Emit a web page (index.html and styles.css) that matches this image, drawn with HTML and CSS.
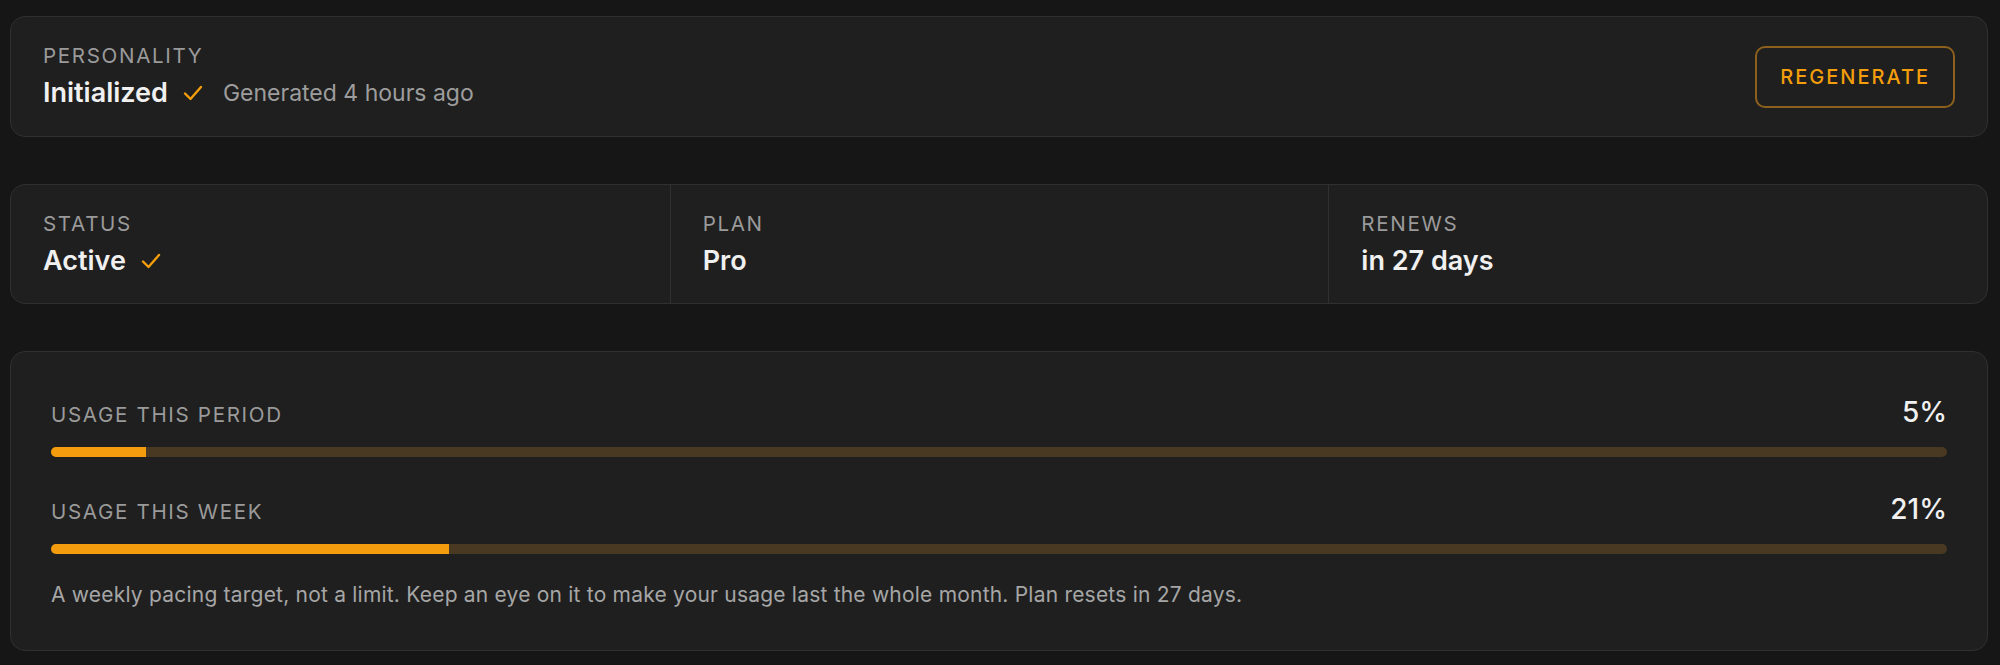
FILE: index.html
```html
<!DOCTYPE html>
<html lang="en">
<head>
    <meta charset="UTF-8">
    <meta name="viewport" content="width=device-width, initial-scale=1.0">
    <title>Account</title>
    <link rel="stylesheet" href="styles.css">
</head>
<body>
    <div id="page">
        <!-- Personality -->
        <section class="card card-row">
            <div class="field">
                <div class="label">Personality</div>
                <div class="value">
                    <span>Initialized</span>
                    <svg class="check" viewBox="0 0 24 24"><polyline points="4,12.5 9.5,18 20,6"/></svg>
                    <span class="sub">Generated 4 hours ago</span>
                </div>
            </div>
            <button class="btn-outline">Regenerate</button>
        </section>

        <!-- Subscription -->
        <section class="card card-cols">
            <div class="col">
                <div class="label">Status</div>
                <div class="value">
                    <span>Active</span>
                    <svg class="check" viewBox="0 0 24 24"><polyline points="4,12.5 9.5,18 20,6"/></svg>
                </div>
            </div>
            <div class="col">
                <div class="label">Plan</div>
                <div class="value">Pro</div>
            </div>
            <div class="col">
                <div class="label">Renews</div>
                <div class="value">in 27 days</div>
            </div>
        </section>

        <!-- Usage -->
        <section class="card card-usage">
            <div class="usage">
                <div class="usage-head">
                    <span class="label">Usage this period</span>
                    <span class="percent">5%</span>
                </div>
                <div class="track"><div class="fill" style="width: 5%;"></div></div>
            </div>
            <div class="usage">
                <div class="usage-head">
                    <span class="label">Usage this week</span>
                    <span class="percent">21%</span>
                </div>
                <div class="track"><div class="fill" style="width: 21%;"></div></div>
            </div>
            <p class="note">A weekly pacing target, not a limit. Keep an eye on it to make your usage last the whole month. Plan resets in 27 days.</p>
        </section>
    </div>
</body>
</html>
```

FILE: styles.css
```css
body {
    background-color: #161616;
    margin: 0;
    font-family: Inter, "Noto Sans", sans-serif;
    color: #efefef;
}

#page {
    display: flex;
    flex-direction: column;
    gap: 47px;
    padding: 16px 12px 16px 10px;
}

.card {
    background-color: #1f1f1f;
    border: 1px solid #303030;
    border-radius: 15px;
}

.label {
    font-size: 20.6px;
    line-height: 28px;
    letter-spacing: 0.08em;
    text-transform: uppercase;
    color: #9a9a9a;
}

.value {
    display: flex;
    align-items: center;
    margin-top: 5px;
    font-size: 27px;
    line-height: 36px;
    font-weight: 600;
    color: #f0f0f0;
}

.check {
    width: 24px;
    height: 24px;
    margin-left: 13px;
    fill: none;
    stroke: #f59e0b;
    stroke-width: 2.4;
    stroke-linecap: round;
    stroke-linejoin: round;
}

.sub {
    margin-left: 18px;
    font-size: 23px;
    font-weight: 400;
    color: #9d9d9d;
}

/* personality row */
.card-row {
    display: flex;
    justify-content: space-between;
    align-items: center;
    padding: 25px 32px 25px 32px;
}

.btn-outline {
    background: transparent;
    border: 2px solid #8d601d;
    border-radius: 10px;
    color: #f59e0b;
    font-family: inherit;
    font-size: 20px;
    font-weight: 500;
    letter-spacing: 0.1em;
    text-transform: uppercase;
    height: 62px;
    padding: 0 23px;
    cursor: pointer;
}

/* subscription columns */
.card-cols {
    display: grid;
    grid-template-columns: 1fr 1fr 1fr;
}

.col {
    padding: 25px 32px 24px;
}

.col + .col {
    border-left: 1px solid #303030;
}

/* usage bars */
.card-usage {
    padding: 43px 40px 41px;
}

.usage + .usage {
    margin-top: 35px;
}

.usage-head {
    display: flex;
    justify-content: space-between;
    align-items: baseline;
}

.percent {
    font-size: 28px;
    line-height: 34px;
    font-weight: 500;
    color: #f0f0f0;
}

.track {
    margin-top: 18px;
    height: 10px;
    border-radius: 5px;
    background-color: #4a3922;
    overflow: hidden;
}

.fill {
    height: 100%;
    background-color: #f39c0e;
}

.note {
    margin: 27px 0 0;
    font-size: 21px;
    line-height: 28px;
    letter-spacing: 0.01em;
    color: #a6a6a6;
}
```
